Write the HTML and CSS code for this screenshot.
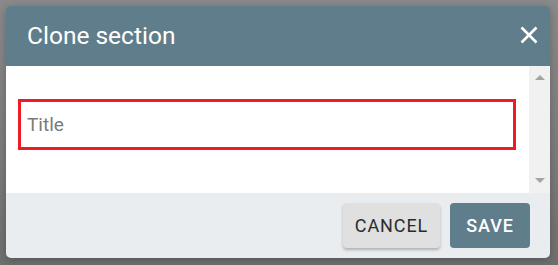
FILE: index.html
```html
<!DOCTYPE html>
<html>
<head>
<meta charset="utf-8">
<link rel="stylesheet" href="styles.css">
</head>
<body>
<div class="backdrop">
  <div class="dialog">
    <div class="header">
      <span class="title">Clone section</span>
      <svg class="close" width="18" height="18" viewBox="0 0 18 18"><path d="M1.5 1.5 L16.5 16.5 M16.5 1.5 L1.5 16.5" stroke="#fff" stroke-width="2.6" fill="none"/></svg>
    </div>
    <div class="content">
      <div class="body">
        <input class="field" type="text" placeholder="Title">
      </div>
      <div class="scrollbar">
        <svg width="10" height="5" viewBox="0 0 10 5"><path d="M5 0 L10 5 L0 5 Z" fill="#a3a3a3"/></svg>
        <svg width="10" height="5" viewBox="0 0 10 5"><path d="M0 0 L10 0 L5 5 Z" fill="#a3a3a3"/></svg>
      </div>
    </div>
    <div class="footer">
      <button class="btn cancel">CANCEL</button>
      <button class="btn save">SAVE</button>
    </div>
  </div>
</div>
</body>
</html>
```
FILE: styles.css
```css
html, body {
  margin: 0;
  padding: 0;
}
body {
  width: 558px;
  height: 265px;
  overflow: hidden;
  font-family: Roboto, "Liberation Sans", sans-serif;
}
.backdrop {
  width: 558px;
  height: 265px;
  background: linear-gradient(180deg, #8a8a8a 0%, #7c7c7c 60%, #6f6f6f 100%);
  padding: 6px 0 0 6px;
  box-sizing: border-box;
}
.dialog {
  width: 544px;
  height: 252px;
  border-radius: 5px;
  overflow: hidden;
  display: flex;
  flex-direction: column;
  box-shadow: 0 2px 8px rgba(0,0,0,0.25);
}
.header {
  height: 60px;
  background: #607d8b;
  display: flex;
  align-items: center;
  justify-content: space-between;
  padding: 0 12px 0 21px;
  box-sizing: border-box;
}
.title {
  color: #fff;
  font-size: 24.5px;
  font-weight: 400;
  margin-top: -2px;
}
.close {
  margin-top: -2px;
}
.content {
  height: 127px;
  display: flex;
  background: #fff;
}
.body {
  flex: 1;
  padding: 33px 13px 0 12px;
}
.field {
  display: block;
  width: 498px;
  height: 51px;
  box-sizing: border-box;
  border: 3px solid #ed1c24;
  border-radius: 0;
  padding: 0 0 0 6px;
  font-family: Roboto, "Liberation Sans", sans-serif;
  font-size: 19px;
  color: #333;
  outline: none;
  background: #fff;
}
.field::placeholder {
  color: #7a7a7a;
}
.scrollbar {
  width: 21px;
  background: #f1f1f1;
  display: flex;
  flex-direction: column;
  justify-content: space-between;
  align-items: center;
  padding: 9px 0 10px;
  box-sizing: border-box;
}
.footer {
  flex: 1;
  background: #e9edf0;
  display: flex;
  justify-content: flex-end;
  align-items: flex-start;
  gap: 10px;
  padding: 10px 20px 0 0;
}
.btn {
  height: 45px;
  border: none;
  border-radius: 4px;
  font-family: Roboto, "Liberation Sans", sans-serif;
  font-size: 18px;
  letter-spacing: 0.9px;
  padding: 0;
  cursor: pointer;
}
.cancel {
  width: 97px;
  background: #e0e0e0;
  color: #2b2b2b;
  box-shadow: 0 2px 3px rgba(0,0,0,0.25);
}
.save {
  width: 80px;
  background: #607d8b;
  color: #fff;
  font-weight: 500;
}
```
